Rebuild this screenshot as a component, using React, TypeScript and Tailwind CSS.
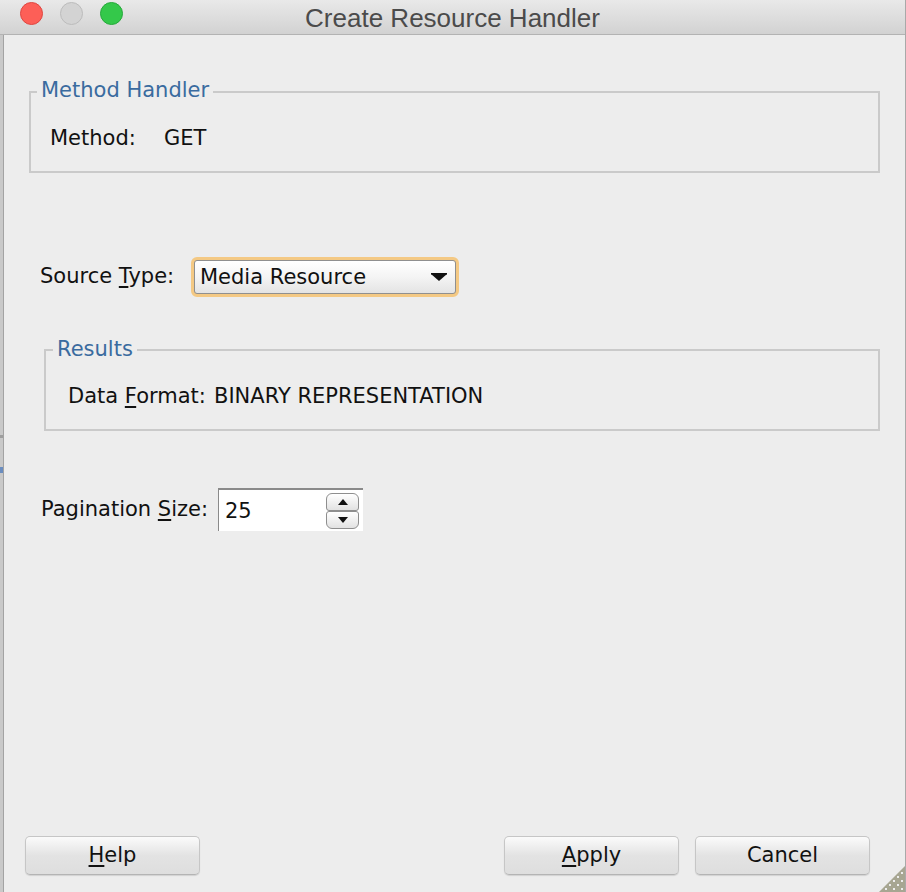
import React from "react";

const ui = { fontFamily: '"DejaVu Sans", "Lucida Grande", sans-serif' };

function GroupBox({
  title,
  className,
  children,
}: {
  title: string;
  className: string;
  children: React.ReactNode;
}) {
  return (
    <div className={`h-[82px] border-2 border-[#cacaca] ${className}`}>
      {title === "Method Handler" ? (
        <span className="block w-fit -mt-[15px] ml-[6px] px-[4px] bg-[#ededed] text-[21px] leading-[24px] text-[#3a6b9f]">
          {title}
        </span>
      ) : (
        <span className="block w-fit -mt-[14px] ml-[7px] px-[4px] bg-[#ededed] text-[21px] leading-[24px] text-[#3a6b9f]">
          {title}
        </span>
      )}
      {children}
    </div>
  );
}

function Btn({ children, className = "" }: { children: React.ReactNode; className?: string }) {
  return (
    <div
      className={`w-[175px] h-[39px] flex items-center justify-center rounded-[5px] border border-[#c6c6c6] border-b-[#b4b4b4] bg-linear-to-b from-[#fbfbfb] via-[#e3e3e3] to-[#dedede] text-[21px] text-[#111] shadow-[0_1px_1px_rgba(0,0,0,0.12)] ${className}`}
    >
      {children}
    </div>
  );
}

function Mn({ c }: { c: string }) {
  return <span className="underline decoration-[2px] underline-offset-[3px]">{c}</span>;
}

export default function App() {
  return (
    <div
      className="w-[906px] h-[892px] flex flex-col bg-[#ededed] border-r border-[#a9a9a9] overflow-hidden"
      style={ui}
    >
      {/* title bar */}
      <div className="h-[35px] relative flex items-center justify-center border-b border-[#b3b3b3] bg-linear-to-b from-[#e9e9e9] to-[#d2d2d2]">
        <div className="absolute left-[20px] top-[2px] flex gap-[17px]">
          <span className="w-[23px] h-[23px] rounded-full bg-[#fd5f57] border border-[#df4640]" />
          <span className="w-[23px] h-[23px] rounded-full bg-[#d3d3d3] border border-[#bcbcbc]" />
          <span className="w-[23px] h-[23px] rounded-full bg-[#34c84a] border border-[#25a93a]" />
        </div>
        <span
          className="text-[26px] text-[#4b4b4b] pt-[2px]"
          style={{ fontFamily: '"Liberation Sans", Arial, sans-serif' }}
        >
          Create Resource Handler
        </span>
      </div>

      <div className="flex flex-1">
        {/* desktop sliver behind window */}
        <div className="w-[3px] flex flex-col bg-[#c9c9c9]">
          <div className="h-[400px]" />
          <div className="h-[3px] bg-[#9e9e9e]" />
          <div className="h-[29px]" />
          <div className="h-[6px] bg-[#6b8dbf]" />
        </div>
        <div className="w-px bg-[#a3a3a3]" />

        <div className="flex-1 flex flex-col relative text-[#111]">
          <GroupBox title="Method Handler" className="mt-[56px] ml-[25px] mr-[25px]">
            <div className="mt-[24px] pl-[19px] flex text-[21px] leading-[24px]">
              <span className="w-[114px]">Method:</span>
              <span>GET</span>
            </div>
          </GroupBox>

          <div className="mt-[84px] ml-[36px] flex items-center text-[21px]">
            <span className="w-[151px]">
              Source <Mn c="T" />ype:
            </span>
            <div className="w-[268px] h-[40px] rounded-[6px] border-[3px] border-[#f4c984] bg-[#f4c984]">
              <div className="h-full flex items-center justify-between rounded-[3px] border border-[#8f8f8f] bg-linear-to-b from-white via-[#f4f4f4] to-[#e4e4e4] pl-[5px] pr-[8px]">
                <span className="leading-[24px]">Media Resource</span>
                <svg width="16" height="8" viewBox="0 0 16 8">
                  <rect x="0" y="0" width="16" height="1.5" fill="#111" />
                  <polygon points="0,1 16,1 8,8" fill="#111" />
                </svg>
              </div>
            </div>
          </div>

          <GroupBox title="Results" className="mt-[52px] ml-[40px] mr-[25px]">
            <div className="mt-[23px] pl-[22px] flex text-[21px] leading-[24px]">
              <span className="w-[146px]">
                Data <Mn c="F" />ormat:
              </span>
              <span>BINARY REPRESENTATION</span>
            </div>
          </GroupBox>

          <div className="mt-[57px] ml-[37px] flex items-center text-[21px]">
            <span className="w-[177px]">
              Pagination <Mn c="S" />ize:
            </span>
            <div className="w-[145px] h-[43px] flex items-center justify-between bg-white border-t-2 border-l border-[#8a8a8a] pl-[6px] pr-[4px]">
              <span className="leading-[24px]">25</span>
              <div className="w-[33px] flex flex-col">
                <div className="h-[18px] flex items-center justify-center rounded-t-[6px] rounded-b-[3px] border border-[#8e8e8e] bg-linear-to-b from-white to-[#e2e2e2]">
                  <svg width="10" height="6" viewBox="0 0 10 6">
                    <polygon points="5,0 10,6 0,6" fill="#111" />
                  </svg>
                </div>
                <div className="h-[18px] flex items-center justify-center rounded-b-[6px] rounded-t-[3px] border border-[#8e8e8e] bg-linear-to-b from-white to-[#e2e2e2]">
                  <svg width="10" height="6" viewBox="0 0 10 6">
                    <polygon points="0,0 10,0 5,6" fill="#111" />
                  </svg>
                </div>
              </div>
            </div>
          </div>

          <div className="flex-1" />

          <div className="flex pb-[17px] pl-[21px] pr-[35px]">
            <Btn>
              <span>
                <Mn c="H" />elp
              </span>
            </Btn>
            <div className="flex-1" />
            <Btn>
              <span>
                <Mn c="A" />pply
              </span>
            </Btn>
            <Btn className="ml-[16px]">Cancel</Btn>
          </div>

          {/* resize grip */}
          <svg
            className="absolute right-0 bottom-0"
            width="26"
            height="26"
            viewBox="0 0 26 26"
          >
            <polygon points="26,0 26,26 0,26" fill="#a7a692" />
            <g fill="#ededed">
              <rect x="22" y="6" width="2" height="2" />
              <rect x="18" y="10" width="2" height="2" />
              <rect x="14" y="14" width="2" height="2" />
              <rect x="10" y="18" width="2" height="2" />
              <rect x="6" y="22" width="2" height="2" />
              <rect x="22" y="14" width="2" height="2" />
              <rect x="18" y="18" width="2" height="2" />
              <rect x="14" y="22" width="2" height="2" />
              <rect x="22" y="22" width="2" height="2" />
            </g>
          </svg>
        </div>
      </div>
    </div>
  );
}
